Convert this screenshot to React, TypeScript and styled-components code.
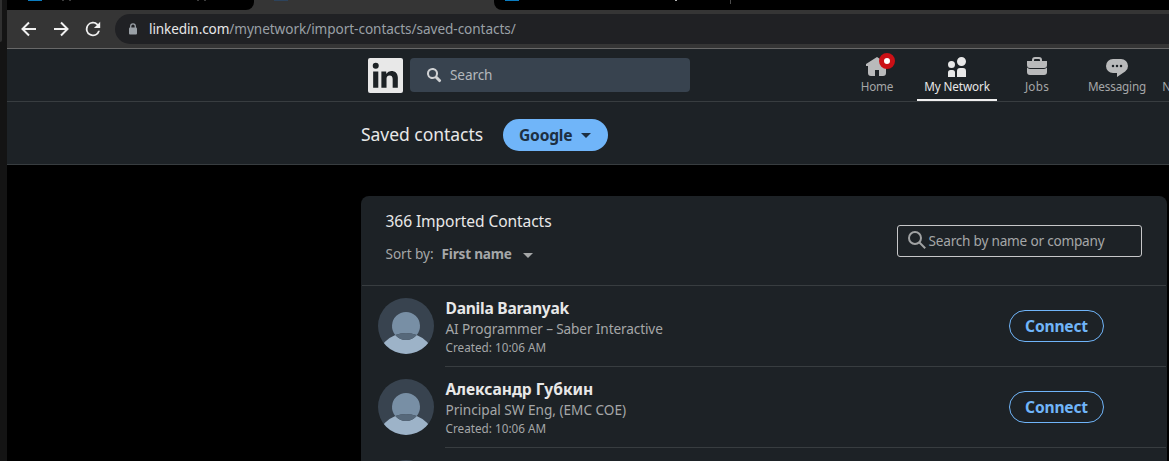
import React from 'react';
import styled, { createGlobalStyle } from 'styled-components';

const GlobalStyle = createGlobalStyle`
  * { box-sizing: border-box; }
  html, body { margin: 0; background: #000; overflow: hidden; }
  body { font-family: "Noto Sans", "Open Sans", sans-serif; color: #e8e8e8; }
  svg { display: block; flex: none; }
`;

const Screen = styled.div`
  display: flex;
  width: 1169px;
  height: 461px;
  overflow: hidden;
  background: #000;
`;
const WindowEdge = styled.div`
  flex: none;
  width: 7px;
  background: #141414;
`;
const EdgeTab = styled.div`
  width: 2px;
  height: 42px;
  background: #303030;
  border-radius: 0 0 2px 0;
`;
const Browser = styled.div`
  flex: 1;
  min-width: 0;
  display: flex;
  flex-direction: column;
`;
const Text = styled.span<{ $size: number; $track?: number; $bold?: boolean; $color?: string; $line?: number }>`
  font-size: ${p => p.$size}px;
  letter-spacing: ${p => p.$track ?? 0}px;
  font-weight: ${p => (p.$bold ? 700 : 400)};
  color: ${p => p.$color ?? '#e8e8e8'};
  line-height: ${p => p.$line ?? 20}px;
  white-space: nowrap;
`;

const TabStrip = styled.div`
  display: flex;
  flex: none;
  height: 10px;
  background: #353535;
`;
const Tab = styled.div<{ $width?: number; $round: string }>`
  display: flex;
  width: ${p => (p.$width ? `${p.$width}px` : 'auto')};
  flex: ${p => (p.$width ? 'none' : '1')};
  background: #000;
  border-radius: ${p => p.$round};
`;
const Favicon = styled.div<{ $left: number; $color: string }>`
  width: 14px;
  height: 1px;
  margin-left: ${p => p.$left}px;
  background: ${p => p.$color};
`;
const ActiveTab = styled.div`
  width: 240px;
`;
const TitleTail = styled.div<{ $left: number; $width: number; $color?: string }>`
  width: ${p => p.$width}px;
  height: 1px;
  margin-left: ${p => p.$left}px;
  background: ${p => p.$color ?? '#3c3c3c'};
`;
const TabDivider = styled.div`
  width: 1px;
  height: 4px;
  margin-left: 53px;
  background: #4c4c4c;
`;
const Toolbar = styled.div`
  display: flex;
  flex: none;
  align-items: center;
  height: 39px;
  padding: 0 0 1px 14px;
  background: #353535;
  border-bottom: 1px solid #686868;
`;
const ToolButtons = styled.div`
  display: flex;
  gap: 16px;
  width: 94px;
`;
const Omnibox = styled.div`
  display: flex;
  align-items: center;
  flex: 1;
  height: 30px;
  padding-left: 13px;
  gap: 11px;
  border-radius: 15px 0 0 15px;
  background: #202124;
`;

const TopNav = styled.header`
  display: flex;
  flex: none;
  height: 53px;
  padding-left: 361px;
  background: #1d2226;
  border-bottom: 1px solid #383d40;
`;
const SearchBox = styled.div`
  display: flex;
  flex: none;
  align-items: center;
  gap: 8px;
  width: 280px;
  height: 34px;
  margin: 9px 147px 0 7px;
  padding-left: 16px;
  border-radius: 4px;
  background: #38434f;
`;
const LogoLink = styled.div`
  padding-top: 9px;
`;
const NavItem = styled.div<{ $active?: boolean }>`
  position: relative;
  display: flex;
  flex: none;
  flex-direction: column;
  align-items: center;
  width: 80px;
  height: 52px;
  padding-top: 6px;
  border-bottom: ${p => (p.$active ? '2px solid #f0f0f0' : '0')};
  color: ${p => (p.$active ? '#e8e8e8' : '#b9babb')};
`;
const Badge = styled.div`
  position: absolute;
  top: 4px;
  left: 42px;
  width: 16px;
  height: 16px;
  border: 5px solid #cb1016;
  border-radius: 50%;
  background: #fff;
`;
const SubHeader = styled.div`
  display: flex;
  flex: none;
  height: 63px;
  padding: 17px 0 0 354px;
  background: #1d2226;
  border-bottom: 1px solid #383d40;
`;
const PageTitle = styled.h1`
  width: 142px;
  height: 30px;
  margin: 0;
  display: flex;
  align-items: center;
  font-weight: 400;
`;
const SourceButton = styled.button`
  display: flex;
  align-items: center;
  justify-content: space-between;
  width: 105px;
  height: 32px;
  padding: 0 17px 0 16px;
  border: 0;
  border-radius: 16px;
  background: #70b5f9;
  font-family: inherit;
`;
const Card = styled.main`
  flex: none;
  width: 806px;
  height: 280px;
  margin: 31px 0 0 354px;
  border-radius: 8px 8px 0 0;
  background: #1d2226;
`;
const CardHeader = styled.div`
  display: flex;
  justify-content: space-between;
  height: 90px;
  margin: 0 1px;
  padding: 15px 24px 0 23.5px;
  border-bottom: 1px solid #383d40;
`;
const Heading = styled.div`
  display: flex;
  flex-direction: column;
  gap: 13px;
`;
const SortRow = styled.div`
  display: flex;
  align-items: center;
`;
const SortValue = styled.div`
  display: flex;
  align-items: center;
  width: 91px;
  justify-content: space-between;
  margin-left: 8px;
  svg { margin-top: 2px; }
`;
const FilterBox = styled.div`
  display: flex;
  align-items: center;
  width: 245px;
  height: 32px;
  margin-top: 14px;
  padding-left: 8px;
  border: 1px solid #c7c8c9;
  border-radius: 3px;
`;
const ContactRow = styled.div`
  display: flex;
  height: 81px;
  padding: 0 1px 0 17px;
`;
const AvatarSlot = styled.div`
  width: 67px;
  padding-top: 12px;
`;
const ContactBody = styled.div`
  display: flex;
  flex: 1;
  justify-content: space-between;
  padding-right: 62px;
  border-bottom: 1px solid #383d40;
`;
const ContactInfo = styled.div`
  display: flex;
  flex-direction: column;
  padding: 12px 0 0 0.5px;
`;
const ConnectButton = styled.button`
  width: 95px;
  height: 32px;
  margin-top: 24px;
  padding: 0;
  border: 1px solid #70b5f9;
  border-radius: 16px;
  background: transparent;
  font-family: inherit;
`;

const Caret = ({ color }: { color: string }) => (
  <svg width="10" height="5" viewBox="0 0 10 5" fill={color}><path d="M0 0h10L5 5z" /></svg>
);

const Avatar = () => (
  <svg width="56" height="56" viewBox="0 0 128 128">
    <clipPath id="round"><circle cx="64" cy="64" r="64" /></clipPath>
    <g clipPath="url(#round)">
      <path fill="#38434f" d="M0 0h128v128H0z" />
      <path fill="#788fa5" d="M88.41 84.67a32 32 0 10-48.82 0 66.13 66.13 0 0148.82 0z" />
      <path fill="#9db3c8" d="M88.41 84.67a32 32 0 01-48.82 0A66.79 66.79 0 000 128h128a66.79 66.79 0 00-39.59-43.33z" />
      <path fill="#56687a" d="M64 96a31.93 31.93 0 0024.41-11.33 66.13 66.13 0 00-48.82 0A31.93 31.93 0 0064 96z" />
    </g>
  </svg>
);

const icons = {
  home: 'M23 9v2h-2v7a3 3 0 01-3 3h-4v-6h-4v6H6a3 3 0 01-3-3v-7H1V9l11-7 5 3.18V2h3v5.09z',
  network: 'M12 16v6H3v-6a3 3 0 013-3h3a3 3 0 013 3zm5.5-3A3.5 3.5 0 1014 9.5a3.5 3.5 0 003.5 3.5zm1 2h-2a2.5 2.5 0 00-2.5 2.5V22h7v-4.5a2.5 2.5 0 00-2.5-2.5zM7.5 2A4.5 4.5 0 1012 6.5 4.49 4.49 0 007.5 2z',
  jobs: 'M17 6V5a3 3 0 00-3-3h-4a3 3 0 00-3 3v1H2v4a3 3 0 003 3h14a3 3 0 003-3V6zM9 5a1 1 0 011-1h4a1 1 0 011 1v1H9zm10 9a4 4 0 003-1.38V17a3 3 0 01-3 3H5a3 3 0 01-3-3v-4.38A4 4 0 005 14z',
  messaging: 'M16 4H8a7 7 0 000 14h4v4l8.16-5.39A6.78 6.78 0 0023 11a7 7 0 00-7-7zm-8 8.25A1.25 1.25 0 119.25 11 1.25 1.25 0 018 12.25zm4 0A1.25 1.25 0 1113.25 11 1.25 1.25 0 0112 12.25zm4 0A1.25 1.25 0 1117.25 11 1.25 1.25 0 0116 12.25z',
  bell: 'M22 19h-8.28a2 2 0 11-3.44 0H2v-1a4.52 4.52 0 011.17-2.83l1-1.17h15.7l1 1.17A4.42 4.42 0 0122 18zM18.21 7.44A6.27 6.27 0 0012 2a6.27 6.27 0 00-6.21 5.44L5 13h14z',
};

const navItems: { id: keyof typeof icons; label: string; track: number; active?: boolean; badge?: boolean }[] = [
  { id: 'home', label: 'Home', track: -0.2, badge: true },
  { id: 'network', label: 'My Network', track: -0.1, active: true },
  { id: 'jobs', label: 'Jobs', track: 0.3 },
  { id: 'messaging', label: 'Messaging', track: -0.15 },
  { id: 'bell', label: 'Notifications', track: 0 },
];

const contacts = [
  { name: 'Danila Baranyak', nameTrack: -0.26, title: 'AI Programmer – Saber Interactive', titleTrack: -0.11 },
  { name: 'Александр Губкин', nameTrack: -0.03, title: 'Principal SW Eng, (EMC COE)', titleTrack: 0 },
  { name: '', nameTrack: 0, title: '', titleTrack: 0 },
];

export default function App() {
  return (
    <Screen>
      <GlobalStyle />
      <WindowEdge><EdgeTab /></WindowEdge>
      <Browser>
        <TabStrip>
          <Tab $width={247} $round="0 0 8px 0">
            <Favicon $left={21} $color="#0a7cc0" />
            <TitleTail $left={20} $width={2} />
            <TitleTail $left={5} $width={2} />
            <TitleTail $left={126} $width={2} />
            <TitleTail $left={5} $width={2} />
          </Tab>
          <ActiveTab><Favicon $left={20} $color="#2d435c" /></ActiveTab>
          <Tab $round="0 0 0 8px">
            <Favicon $left={11} $color="#0a7cc0" />
            <TitleTail $left={156} $width={2} $color="#b0b0b0" />
            <TabDivider />
          </Tab>
        </TabStrip>
        <Toolbar>
          <ToolButtons>
            <svg width="16" height="16" viewBox="0 0 16 16" fill="none" stroke="#f1f1f1" strokeWidth="2"><path d="M15 8H2.5M8 1.5L1.5 8 8 14.5" /></svg>
            <svg width="16" height="16" viewBox="0 0 16 16" fill="none" stroke="#f1f1f1" strokeWidth="2"><path d="M1 8h12.5M8 1.5L14.5 8 8 14.5" /></svg>
            <svg width="16" height="16" viewBox="0 0 16 16" fill="#f1f1f1"><path d="M13.65 2.35A8 8 0 1 0 15.73 10h-2.08A6 6 0 1 1 8 2c1.66 0 3.14.69 4.22 1.78L9 7h7V0z" transform="translate(.8 .8) scale(.9)" /></svg>
          </ToolButtons>
          <Omnibox>
            <svg width="10" height="12" viewBox="0 0 10 12"><rect x="1" y="4.5" width="8" height="7" rx="1" fill="#9aa0a6" /><path d="M2.7 5V3.2a2.3 2.3 0 014.6 0V5" fill="none" stroke="#9aa0a6" strokeWidth="1.3" /></svg>
            <Text $size={13.6} $track={-0.06} $color="#9aa0a6">
              <Text $size={13.6} $track={-0.12}>linkedin.com</Text>/mynetwork/import-contacts/saved-contacts/
            </Text>
          </Omnibox>
        </Toolbar>
        <TopNav>
          <LogoLink>
            <svg width="35" height="35" viewBox="0 0 34 34" fill="#e8e8e8"><path d="M34 2v30a2 2 0 01-2 2H2a2 2 0 01-2-2V2a2 2 0 012-2h30a2 2 0 012 2zM10 13H5v16h5zm.45-5.5A2.88 2.88 0 007.59 4.6H7.5a2.9 2.9 0 000 5.8 2.88 2.88 0 002.95-2.81zM29 19.28c0-4.81-3.06-6.68-6.1-6.68a5.7 5.7 0 00-5.06 2.58h-.14V13H13v16h5v-8.51a3.32 3.32 0 013-3.58h.19c1.59 0 2.77 1 2.77 3.52V29h5z" /></svg>
          </LogoLink>
          <SearchBox>
            <svg width="16" height="16" viewBox="0 0 16 16" fill="#d0d2d4"><path d="M14.56 12.44L11.3 9.18a5.51 5.51 0 10-2.12 2.12l3.26 3.26a1.5 1.5 0 102.12-2.12zM3 6.5A3.5 3.5 0 116.5 10 3.5 3.5 0 013 6.5z" /></svg>
            <Text $size={13.6} $track={-0.1} $color="#b4b8bc">Search</Text>
          </SearchBox>
          {navItems.map(item => (
            <NavItem key={item.id} $active={item.active}>
              <svg width="24" height="24" viewBox="0 0 24 24" fill="currentColor">
                <path d={icons[item.id]} transform={item.id === 'network' ? 'matrix(-1 0 0 1 24 0)' : undefined} />
              </svg>
              {item.badge && <Badge />}
              <Text $size={11.7} $track={item.track} $line={15} $color={item.active ? '#e8e8e8' : '#a5a7a8'}>{item.label}</Text>
            </NavItem>
          ))}
        </TopNav>
        <SubHeader>
          <PageTitle><Text $size={17.5} $track={-0.03} $line={24}>Saved contacts</Text></PageTitle>
          <SourceButton>
            <Text $size={15.6} $track={-0.2} $bold $color="#1d2f42">Google</Text>
            <Caret color="#1d2f42" />
          </SourceButton>
        </SubHeader>
        <Card>
          <CardHeader>
            <Heading>
              <Text $size={15.6} $track={-0.1}>366 Imported Contacts</Text>
              <SortRow>
                <Text $size={13.6} $track={-0.05} $color="#a5a7a8">Sort by:</Text>
                <SortValue>
                  <Text $size={13.6} $track={-0.2} $bold $color="#a5a7a8">First name</Text>
                  <Caret color="#a5a7a8" />
                </SortValue>
              </SortRow>
            </Heading>
            <FilterBox>
              <svg width="22.5" height="24" viewBox="0 0 22.5 24" fill="none" stroke="#a0a2a3" strokeWidth="2"><circle cx="9" cy="9" r="6" /><path d="M13.2 13.2l6 6" /></svg>
              <Text $size={13.6} $track={-0.21} $color="#a5a7a8">Search by name or company</Text>
            </FilterBox>
          </CardHeader>
          {contacts.map((c, i) => (
            <ContactRow key={i}>
              <AvatarSlot><Avatar /></AvatarSlot>
              <ContactBody>
                <ContactInfo>
                  <Text $size={15.6} $track={c.nameTrack} $bold>{c.name}</Text>
                  <Text $size={13.6} $track={c.titleTrack} $line={22} $color="#a5a7a8">{c.title}</Text>
                  {c.name && <Text $size={11.7} $track={0.02} $line={15} $color="#a5a7a8">Created: 10:06 AM</Text>}
                </ContactInfo>
                {c.name && <ConnectButton><Text $size={15.6} $track={-0.2} $bold $color="#70b5f9">Connect</Text></ConnectButton>}
              </ContactBody>
            </ContactRow>
          ))}
        </Card>
      </Browser>
    </Screen>
  );
}
